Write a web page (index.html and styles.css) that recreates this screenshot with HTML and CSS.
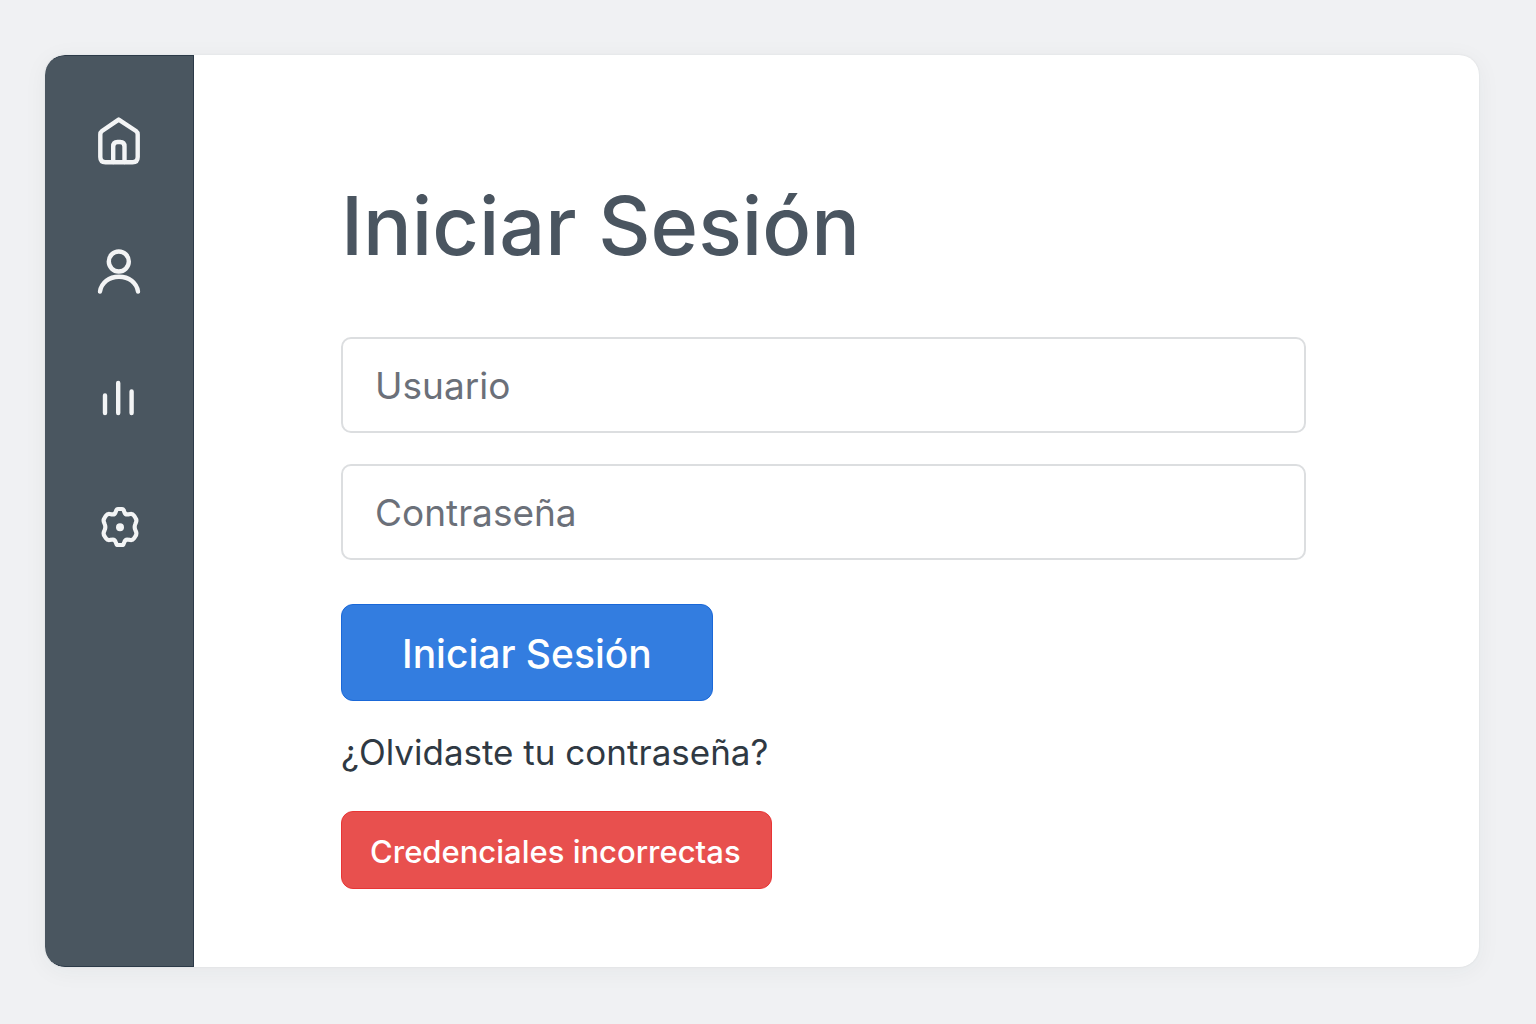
FILE: index.html
```html
<!DOCTYPE html>
<html lang="es">
<head>
  <meta charset="utf-8">
  <meta name="viewport" content="width=device-width, initial-scale=1">
  <title>Iniciar Sesión</title>
  <link rel="stylesheet" href="styles.css">
</head>
<body>
  <div class="card">
    <nav class="sidebar">
      <a class="nav-link" href="#inicio" aria-label="Inicio">
        <svg class="icon" viewBox="0 0 56 56">
          <path d="M27.7 6.6 L11 18 Q9.3 19.3 9.3 21.5 V44 Q9.3 49.2 14.5 49.2 H41.5 Q46.7 49.2 46.7 44 V21.5 Q46.7 19.3 45 18 Z"/>
          <path d="M22.2 49 V33.5 Q22.2 29 26.5 29 H29.2 Q33.5 29 33.5 33.5 V49"/>
        </svg>
      </a>
      <a class="nav-link" href="#perfil" aria-label="Perfil">
        <svg class="icon" viewBox="0 0 56 56">
          <circle cx="27.8" cy="20.5" r="10"/>
          <path d="M9 50.5 C10.5 41.5 18 35.8 28 35.8 S45.5 41.5 47 50.5"/>
        </svg>
      </a>
      <a class="nav-link" href="#informes" aria-label="Informes">
        <svg class="icon" viewBox="0 0 56 56">
          <path d="M14 26.5 V44 M27.2 14 V44 M40.6 22.5 V44"/>
        </svg>
      </a>
      <a class="nav-link" href="#ajustes" aria-label="Ajustes">
        <svg class="icon icon-gear" viewBox="33 21 168 168">
          <path d="M114 57 H126 Q130 57 131 61 L133 66 Q136 75 145 73 L151 72 Q158 71 162 77 L166 83 Q171 90 168 97 L166 102 Q162 111 166 120 L168 125 Q171 132 166 139 L162 145 Q158 151 151 150 L145 149 Q136 147 133 156 L131 161 Q130 165 126 165 H114 Q110 165 109 161 L107 156 Q104 147 95 149 L89 150 Q82 151 78 145 L74 139 Q69 132 72 125 L74 120 Q78 111 74 102 L72 97 Q69 90 74 83 L78 77 Q82 71 89 72 L95 73 Q104 75 107 66 L109 61 Q110 57 114 57 Z"/>
          <circle class="icon-dot" cx="120" cy="112" r="12"/>
        </svg>
      </a>
    </nav>
    <main class="content">
      <h1 class="title">Iniciar Sesión</h1>
      <form class="form">
        <input class="field" type="text" placeholder="Usuario" aria-label="Usuario">
        <input class="field" type="password" placeholder="Contraseña" aria-label="Contraseña">
        <button class="submit" type="submit">Iniciar Sesión</button>
      </form>
      <a class="forgot" href="#recuperar">¿Olvidaste tu contraseña?</a>
      <p class="alert" role="alert">Credenciales incorrectas</p>
    </main>
  </div>
</body>
</html>
```
FILE: styles.css
```css
* {
  box-sizing: border-box;
}

body {
  display: flex;
  min-height: 100vh;
  margin: 0;
  padding: 55px 57px 57px 45px;
  background: #f0f1f3;
  font-family: Inter, "Liberation Sans", sans-serif;
}

.card {
  display: flex;
  flex: 1;
  overflow: hidden;
  border-radius: 20px;
  background: #fff;
  box-shadow: 0 4px 24px rgba(40, 50, 50, 0.05), 0 0 2px rgba(40, 50, 50, 0.1);
}

.sidebar {
  display: flex;
  flex: none;
  flex-direction: column;
  gap: 72px;
  padding: 57px 46px;
  border: 1px solid #2c3a48;
  border-width: 1px 1px 1px 0;
  border-radius: 20px 0 0 20px;
  background: #4a5660;
}

.nav-link {
  display: block;
  height: 56px;
}

.icon {
  display: block;
  width: 56px;
  height: 56px;
  fill: none;
  stroke: #f3f4f5;
  stroke-width: 4.4;
  stroke-linecap: round;
  stroke-linejoin: round;
}

.icon-gear {
  stroke-width: 12.5;
}

.icon-dot {
  fill: #f3f4f5;
  stroke: none;
}

.content {
  display: flex;
  flex: 1;
  flex-direction: column;
  align-items: flex-start;
  padding: 121px 173px 76px 147px;
}

.title {
  margin: 0 0 61px;
  color: #4a5560;
  font-size: 81px;
  font-weight: 500;
  line-height: 100px;
}

.form {
  display: flex;
  flex-direction: column;
  align-items: flex-start;
  align-self: stretch;
}

.field {
  width: 100%;
  height: 96px;
  margin-bottom: 31px;
  padding: 0 32px;
  border: 2px solid #dcdee0;
  border-radius: 10px;
  background: #fff;
  color: #2f3943;
  font: 400 37px/48px Inter, "Liberation Sans", sans-serif;
}

.field::placeholder {
  color: #6b7079;
  opacity: 1;
}

.submit {
  height: 97px;
  margin-top: 13px;
  padding: 2px 60px 0;
  border: 1px solid #1a68d8;
  border-radius: 12px;
  background: #337de0;
  color: #fff;
  font: 500 39px/48px Inter, "Liberation Sans", sans-serif;
}

.forgot {
  margin: 27px 0 35px;
  color: #2f3943;
  font-size: 35px;
  line-height: 48px;
  text-decoration: none;
}

.alert {
  margin: 0;
  padding: 16px 30px 12px 28px;
  border: 1px solid #e83535;
  border-radius: 12px;
  background: #e8504e;
  color: #fff;
  font-size: 31px;
  font-weight: 500;
  line-height: 48px;
}
```
